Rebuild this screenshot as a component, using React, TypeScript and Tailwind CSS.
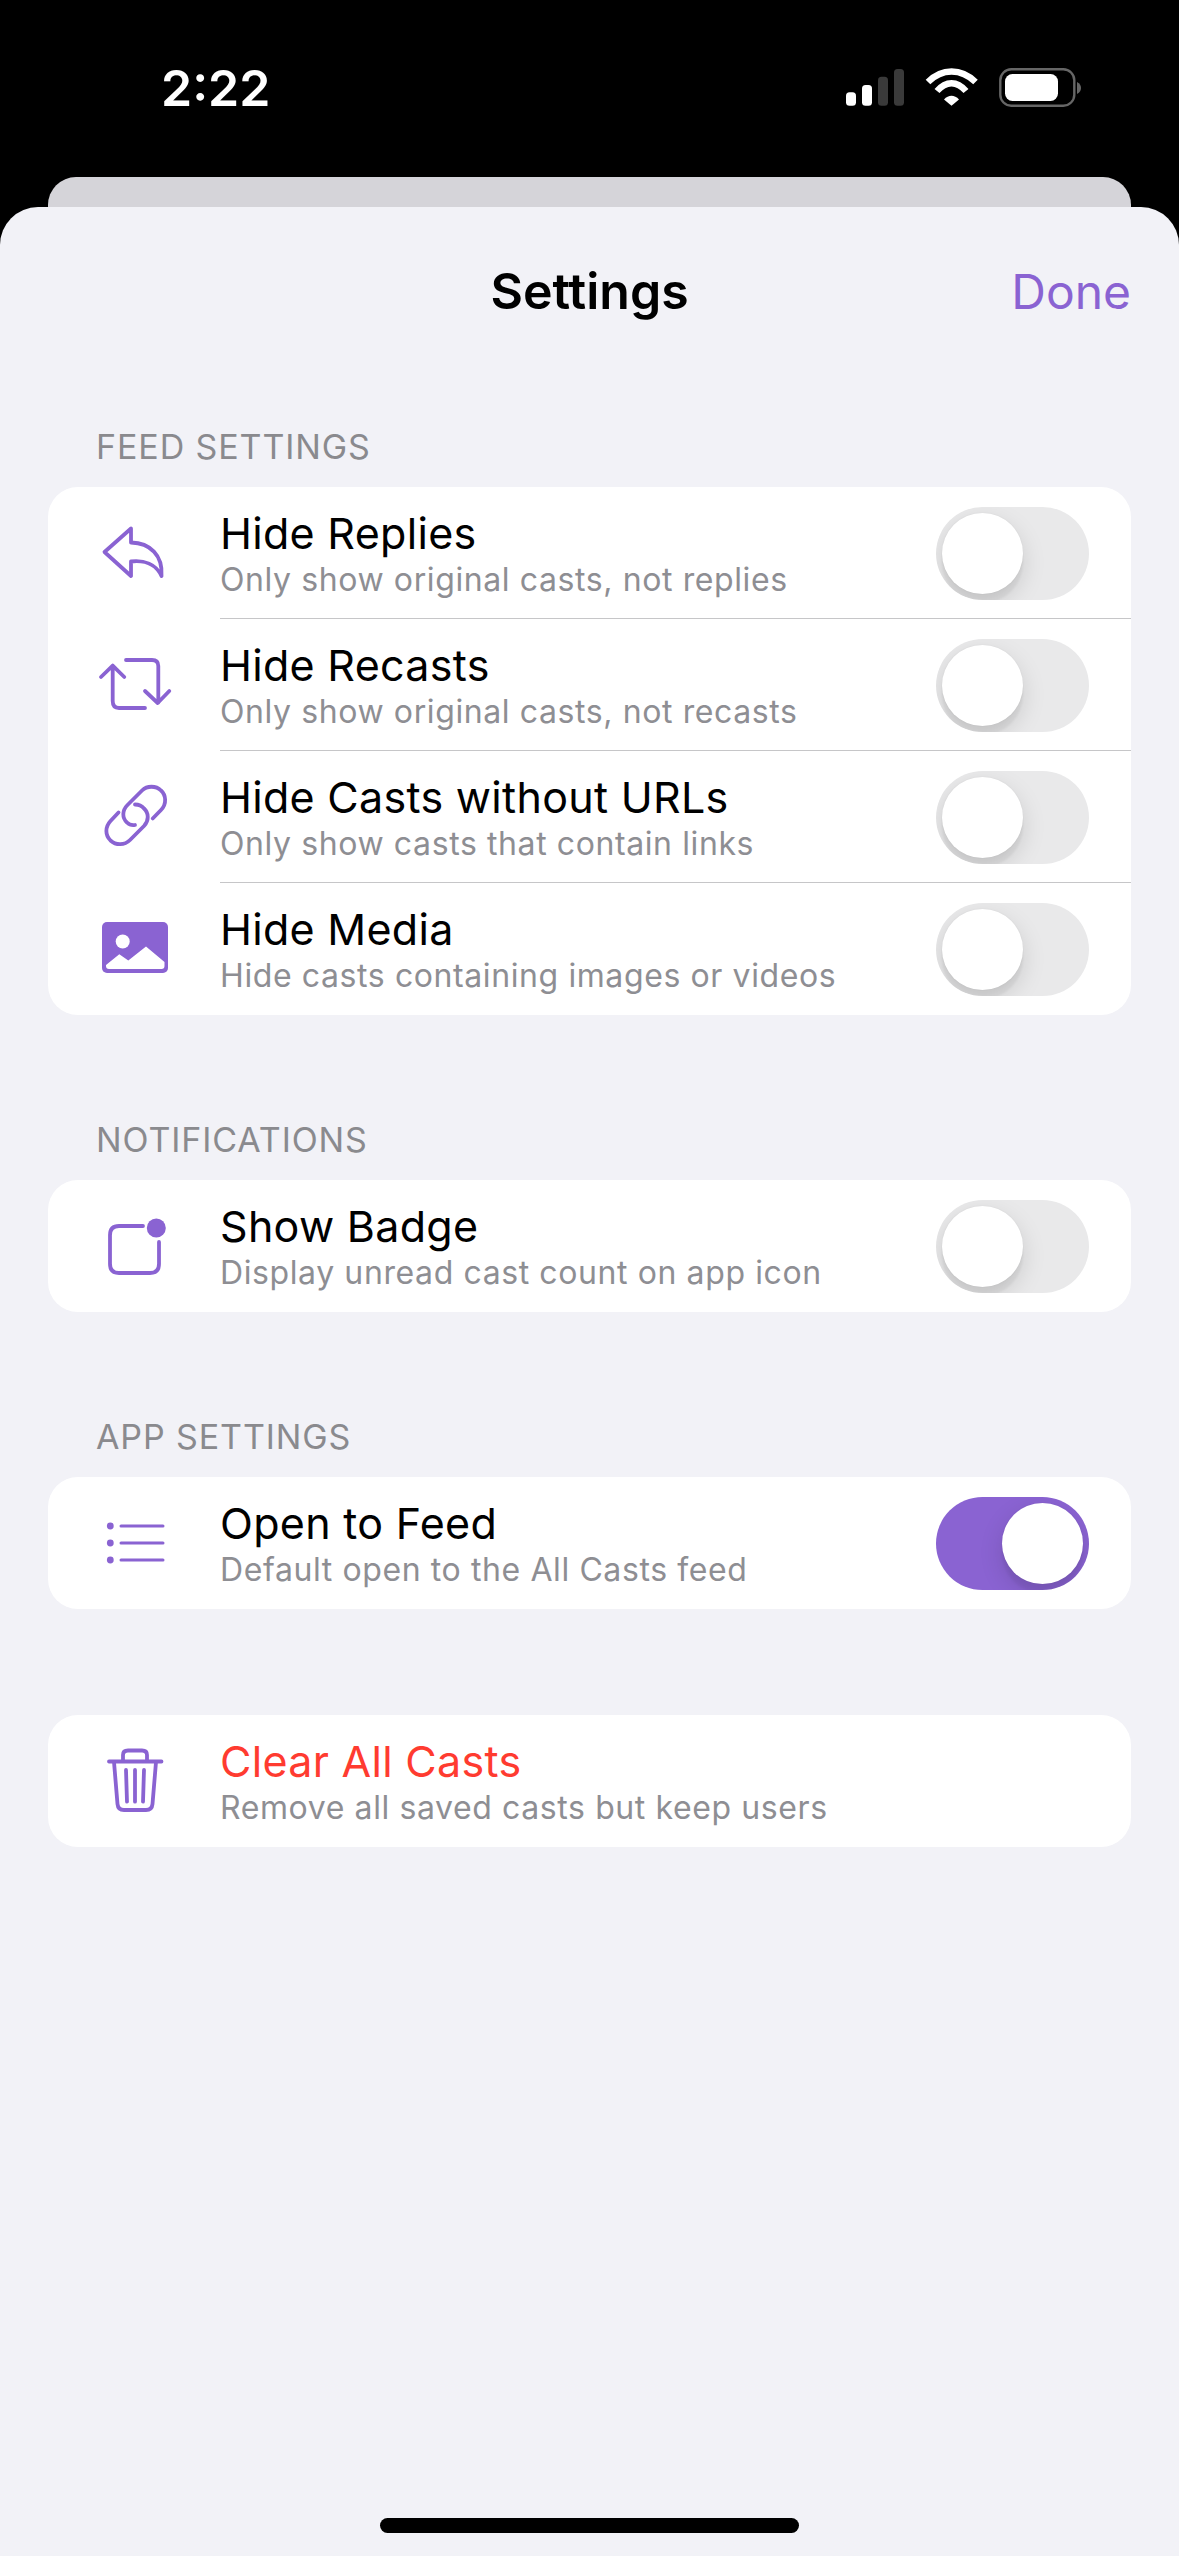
const P = "#8a63d2";

function Icon({ children }: { children: React.ReactNode }) {
  return (
    <div className="flex w-[172px] shrink-0 items-center justify-center">
      <svg width="80" height="80" viewBox="0 0 80 80" fill="none" stroke={P} strokeWidth="3.8" strokeLinecap="round" strokeLinejoin="round">
        {children}
      </svg>
    </div>
  );
}

function Toggle({ on = false }: { on?: boolean }) {
  return (
    <div className={`flex h-[93px] w-[153px] shrink-0 overflow-hidden rounded-full p-[6px] ${on ? "justify-end bg-[#8a63d2]" : "justify-start bg-[#e9e9ea]"}`}>
      <div className="h-[81px] w-[81px] rounded-full bg-white shadow-[0_9px_24px_rgba(0,0,0,0.13),0_9px_3px_rgba(0,0,0,0.05),0_0_2px_rgba(0,0,0,0.06)]" />
    </div>
  );
}

function Row({ icon, title, sub, toggle, on, red, last }: { icon: React.ReactNode; title: string; sub: string; toggle?: boolean; on?: boolean; red?: boolean; last?: boolean }) {
  return (
    <div className="flex h-[132px] items-stretch">
      <Icon>{icon}</Icon>
      <div className={`flex min-w-0 flex-1 items-center justify-between pr-[42px] ${last ? "" : "border-b border-[#c6c6c8] pt-[2px]"}`}>
        <div className="flex flex-col">
          <div className={`text-[43px] leading-[50px] tracking-[0.3px] ${red ? "text-[#ff3b30]" : "text-black"}`}>{title}</div>
          <div className="mt-[3px] text-[32px] leading-[38px] tracking-[0.6px] text-[#8e8e93]">{sub}</div>
        </div>
        {toggle && <Toggle on={on} />}
      </div>
    </div>
  );
}

function Label({ children }: { children: React.ReactNode }) {
  return <div className="mb-[20px] mt-[105px] pl-[96px] text-[34px] leading-[40px] tracking-[0.9px] text-[#8a8a8e]">{children}</div>;
}

function Card({ children }: { children: React.ReactNode }) {
  return <div className="mx-[48px] overflow-hidden rounded-[30px] bg-white">{children}</div>;
}

function StatusIcons() {
  return (
    <svg width="245" height="50" viewBox="840 60 245 50" fill="none">
      <rect x="846" y="92.3" width="10" height="13.4" rx="3.5" fill="#fff" />
      <rect x="862" y="85" width="10" height="20.7" rx="3.5" fill="#fff" />
      <rect x="878" y="76.7" width="10" height="29" rx="3.5" fill="#3a3a3a" />
      <rect x="894" y="69" width="10" height="36.7" rx="3.5" fill="#3a3a3a" />
      <path d="M928 82C942 68 961 68 975.5 82" stroke="#fff" strokeWidth="6.5" />
      <path d="M937 91C946 80.5 957 80.5 966 91" stroke="#fff" strokeWidth="6.5" />
      <path d="M944 99.5C948.5 94.5 954.5 94.5 959 99.5L951.5 105.7Z" fill="#fff" />
      <rect x="1000.3" y="69.3" width="74" height="36.4" rx="11" stroke="#666" strokeWidth="2.4" />
      <rect x="1005" y="74" width="53" height="27" rx="7.5" fill="#fff" />
      <path d="M1077 82V94C1080 92.5 1081 90 1081 88C1081 86 1080 83.5 1077 82Z" fill="#666" />
    </svg>
  );
}

export default function App() {
  return (
    <div className="flex h-[2556px] w-[1179px] flex-col overflow-hidden bg-black [font-family:Inter,sans-serif]">
      <div className="flex h-[177px] shrink-0 items-start justify-between pl-[161px] pr-[94px]">
        <div className="mt-[58px] text-[50px] font-semibold leading-[60px] text-white">2:22</div>
        <div className="mt-[60px]"><StatusIcons /></div>
      </div>
      <div className="mx-[48px] h-[30px] shrink-0 rounded-t-[28px] bg-[#d5d4d9]" />
      <div className="flex flex-1 flex-col rounded-t-[38px] bg-[#f2f2f7]">
        <div className="relative mt-[52px] h-[63px] text-center text-[50px] font-semibold leading-[64px] text-black">
          Settings
          <div className="absolute right-[48px] top-[1px] text-[48px] font-normal text-[#8a63d2]">Done</div>
        </div>

        <Label>FEED SETTINGS</Label>
        <Card>
          <Row title="Hide Replies" sub="Only show original casts, not replies" toggle icon={<path d="M37 15.5L10.5 39L37 63V48.5C50 47 62 51 67.5 63C69 42 56 30 37 29.5Z" />} />
          <Row title="Hide Recasts" sub="Only show original casts, not recasts" toggle icon={<path d="M7 32L18.7 20.6L30.3 32M18.7 21V56Q18.7 63 25 63H51M32 15H58Q64.3 15 64.3 21V57.5M51 46L63.7 58L75.3 46" />} />
          <Row title="Hide Casts without URLs" sub="Only show casts that contain links" toggle icon={<path d="M58.7 41.5L67 33C73 27 72 18 67 13.5C62 8.5 53 8.5 48 13.5L33.5 28C28 33.5 28 41 33 45.5C35 47.5 38 48.5 41 48M41 27.5C45 27.5 48 29 50 31.5C55 36 55 43.5 50 49L36 63C30.5 68.5 22 68.5 16.5 63.5C11 58 11 50 16.5 44L24.5 35.5" />} />
          <Row last title="Hide Media" sub="Hide casts containing images or videos" toggle icon={
            <>
              <rect x="8" y="13" width="66" height="51" rx="5" fill={P} stroke="none" />
              <circle cx="28.7" cy="32.5" r="7" fill="#fff" stroke="none" />
              <path d="M12 56L25.3 45.2L34.3 51.4L52 37.6L70.5 53V57Q70.5 60 67.5 60H15Q12 60 12 57Z" fill="#fff" stroke="none" />
            </>
          } />
        </Card>

        <Label>NOTIFICATIONS</Label>
        <Card>
          <Row last title="Show Badge" sub="Display unread cast count on app icon" toggle icon={
            <>
              <path d="M49 20H25Q16 20 16 29V58Q16 67 25 67H56Q65 67 65 58V36" />
              <circle cx="62.3" cy="22" r="9.5" fill={P} stroke="none" />
            </>
          } />
        </Card>

        <Label>APP SETTINGS</Label>
        <Card>
          <Row last title="Open to Feed" sub="Default open to the All Casts feed" toggle on icon={
            <>
              <path d="M27 23H69M27 40H69M27 57H69" strokeWidth="3" />
              <circle cx="16.3" cy="23" r="3.4" fill={P} stroke="none" />
              <circle cx="16.3" cy="40" r="3.4" fill={P} stroke="none" />
              <circle cx="16.3" cy="57" r="3.4" fill={P} stroke="none" />
            </>
          } />
        </Card>

        <div className="h-[106px] shrink-0" />
        <Card>
          <Row last red title="Clear All Casts" sub="Remove all saved casts but keep users" icon={
            <path d="M15 20.5H67.5M20 21L23.5 63Q24 69 30 69H52Q58 69 58.5 63L62 21M29 20V14Q29 9.5 34 9.5H48Q53 9.5 53 14V20M32 29L33 60.7M41 29V60.7M50 29L49 60.7" />
          } />
        </Card>

        <div className="mb-[23px] mt-auto flex justify-center">
          <div className="h-[15px] w-[419px] rounded-full bg-black" />
        </div>
      </div>
    </div>
  );
}
